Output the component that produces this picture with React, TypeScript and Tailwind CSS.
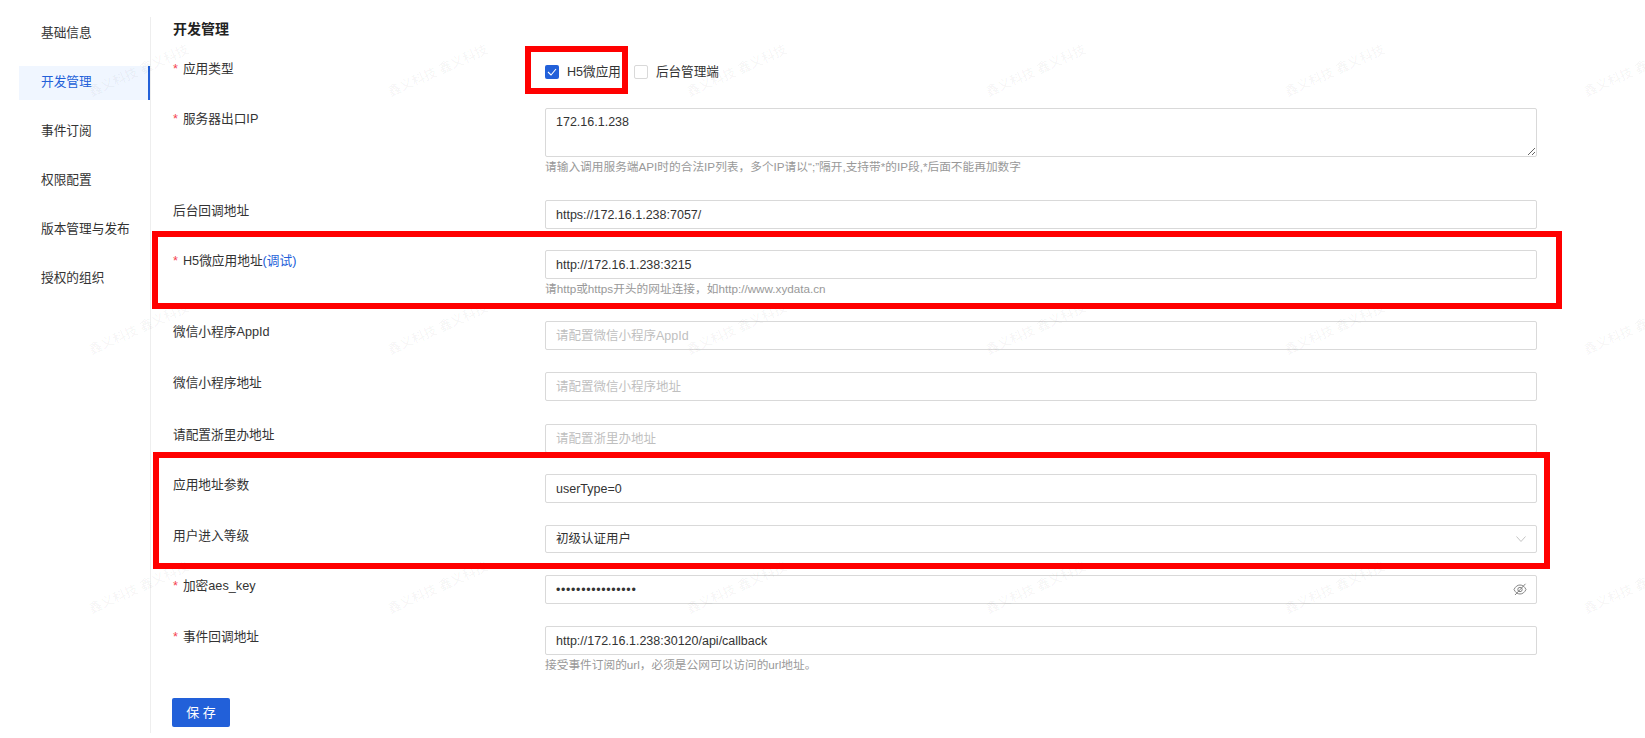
import type { ReactNode } from "react";

const FONT = "font-['Liberation_Sans','Noto_Sans_CJK_SC',sans-serif]";

const NAV = ["基础信息", "开发管理", "事件订阅", "权限配置", "版本管理与发布", "授权的组织"];

const INPUT =
  "h-[29px] w-full rounded-[2px] border border-[#d9d9d9] bg-white px-[10px] text-[12.5px] text-[#333] outline-none placeholder:text-[#bfbfbf]";

function Sidebar() {
  return (
    <aside className="mt-[17px] h-[716px] w-[151px] shrink-0 border-r border-[#eeeeee] pl-[19px]">
      <div className="-mt-[8px]">
        {NAV.map((item, i) => (
          <div key={item} className="flex h-[49px] items-center">
            {i === 1 ? (
              <div className="flex h-[34px] w-[132px] items-center border-r-2 border-[#2260d9] bg-[#f0f6ff] pl-[22px] text-[12.7px] text-[#2260d9]">
                {item}
              </div>
            ) : (
              <div className="pl-[22px] text-[12.7px] text-[#333]">{item}</div>
            )}
          </div>
        ))}
      </div>
    </aside>
  );
}

function Row({ label, required, gap, children }: { label: ReactNode; required?: boolean; gap: string; children: ReactNode }) {
  return (
    <div className={`flex ${gap}`}>
      <label className="w-[372px] shrink-0 pt-[2px] text-[12.7px] leading-[18px] text-[#333]">
        {required && <span className="mr-[5px] text-[#f5424d]">*</span>}
        {label}
      </label>
      <div className="w-[992px]">{children}</div>
    </div>
  );
}

function Help({ children }: { children: ReactNode }) {
  return <p className="mt-[1px] text-[11.7px] leading-[18px] text-[#999]">{children}</p>;
}

function Checkbox({ checked, label }: { checked?: boolean; label: string }) {
  return (
    <span className="flex items-center gap-[8px] text-[12.6px] text-[#333]">
      <span
        className={
          checked
            ? "flex h-[14px] w-[14px] items-center justify-center rounded-[2px] bg-[#2260d9]"
            : "h-[14px] w-[14px] rounded-[2px] border border-[#d9d9d9] bg-white"
        }
      >
        {checked && (
          <svg width="10" height="8" viewBox="0 0 10 8" fill="none">
            <path d="M1 4l3 3 5-6" stroke="#fff" strokeWidth="1.1" />
          </svg>
        )}
      </span>
      {label}
    </span>
  );
}

function RedBox({ className }: { className: string }) {
  return <div className={`absolute border-[6px] border-[#ff0000] ${className}`} />;
}

function Watermarks() {
  return (
    <div className="pointer-events-none absolute -left-[10.5px] -top-[59px] grid grid-cols-[repeat(6,299px)] auto-rows-[258.5px]">
      {Array.from({ length: 18 }).map((_, i) => (
        <div key={i} className="flex items-center justify-center">
          <span className="-rotate-[24deg] whitespace-nowrap text-[13px] text-black/[0.055]">鑫义科技 鑫义科技</span>
        </div>
      ))}
    </div>
  );
}

export default function App() {
  return (
    <div className={`relative flex h-[738px] overflow-hidden bg-white ${FONT}`}>
      <Sidebar />
      <main className="pl-[22px] pt-[20px]">
        <h2 className="mb-[20px] text-[14px] font-bold leading-[18px] text-[#222]">开发管理</h2>
        <Row label="应用类型" required gap="mb-[22px]">
          <div className="flex h-[28px] items-center gap-[13px]">
            <Checkbox checked label="H5微应用" />
            <Checkbox label="后台管理端" />
          </div>
        </Row>
        <Row label="服务器出口IP" required gap="mb-[24px]">
          <textarea
            readOnly
            defaultValue="172.16.1.238"
            className="block h-[49px] w-full resize-y rounded-[2px] border border-[#d9d9d9] bg-white px-[10px] pt-[4px] text-[12.5px] leading-[18px] text-[#333] outline-none"
          />
          <Help>请输入调用服务端API时的合法IP列表，多个IP请以“;”隔开,支持带*的IP段,*后面不能再加数字</Help>
        </Row>
        <Row label="后台回调地址" gap="mb-[21px]">
          <input readOnly className={INPUT} defaultValue="https://172.16.1.238:7057/" />
        </Row>
        <Row label={<>H5微应用地址<span className="text-[#2260d9]">(调试)</span></>} required gap="mb-[23px]">
          <input readOnly className={INPUT} defaultValue="http://172.16.1.238:3215" />
          <Help>请http或https开头的网址连接，如http://www.xydata.cn</Help>
        </Row>
        <Row label="微信小程序AppId" gap="mb-[22px]">
          <input readOnly className={INPUT} placeholder="请配置微信小程序AppId" />
        </Row>
        <Row label="微信小程序地址" gap="mb-[23px]">
          <input readOnly className={INPUT} placeholder="请配置微信小程序地址" />
        </Row>
        <Row label="请配置浙里办地址" gap="mb-[21px]">
          <input readOnly className={INPUT} placeholder="请配置浙里办地址" />
        </Row>
        <Row label="应用地址参数" gap="mb-[22px]">
          <input readOnly className={INPUT} defaultValue="userType=0" />
        </Row>
        <Row label="用户进入等级" gap="mb-[22px]">
          <div className="flex h-[28px] items-center justify-between rounded-[2px] border border-[#d9d9d9] bg-white pl-[10px] pr-[10px] text-[12.5px] text-[#333]">
            初级认证用户
            <svg width="10" height="6" viewBox="0 0 10 6" fill="none">
              <path d="M.5.5 5 5.5 9.5.5" stroke="#c4c4c4" />
            </svg>
          </div>
        </Row>
        <Row label="加密aes_key" required gap="mb-[22px]">
          <div className="relative">
            <input readOnly type="password" className={`${INPUT} tracking-[0.65px]`} defaultValue="1234567890123456" />
            <svg className="absolute right-[10px] top-[8px]" width="14" height="13" viewBox="0 0 14 13" fill="none" stroke="#777" strokeWidth="0.9">
              <path d="M1 6.5c1.5-3 3.5-4.5 6-4.5s4.500 1.500 6 4.500c-1.500 3-3.500 4.500-6 4.500S2.500 9.500 1 6.500z" />
              <circle cx="7" cy="6.500" r="2.200" />
              <path d="M2 12 12.500.800" />
            </svg>
          </div>
        </Row>
        <Row label="事件回调地址" required gap="mb-[24px]">
          <input readOnly className={INPUT} defaultValue="http://172.16.1.238:30120/api/callback" />
          <Help>接受事件订阅的url，必须是公网可以访问的url地址。</Help>
        </Row>
        <button className="-ml-[1px] h-[29px] w-[58px] rounded-[2px] bg-[#2260d9] text-[13px] text-white">保 存</button>
      </main>
      <Watermarks />
      <RedBox className="left-[525px] top-[46px] h-[48px] w-[103px]" />
      <RedBox className="left-[152px] top-[231px] h-[78px] w-[1410px]" />
      <RedBox className="left-[153px] top-[452px] h-[117px] w-[1397px]" />
    </div>
  );
}
